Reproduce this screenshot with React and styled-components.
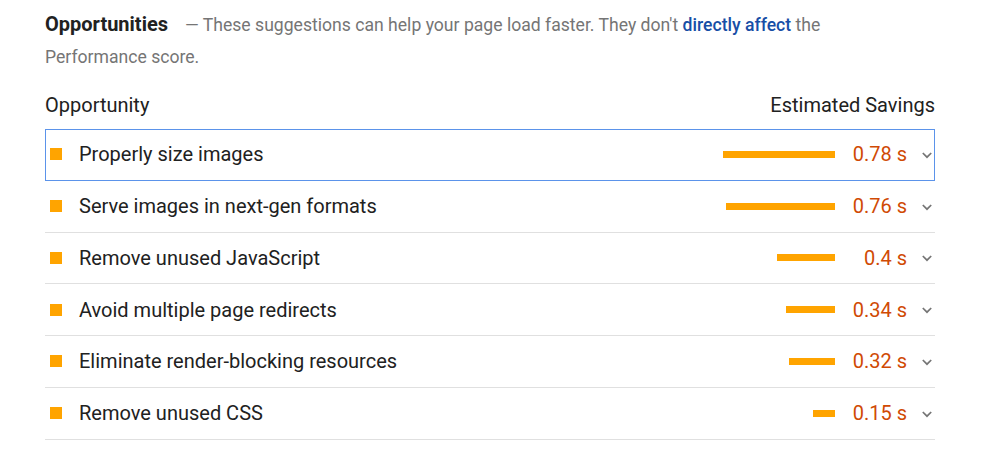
import React from "react";
import styled, { createGlobalStyle } from "styled-components";

const GlobalStyle = createGlobalStyle`
  body {
    margin: 0;
    background: #fff;
    font-family: Roboto, "Liberation Sans", sans-serif;
  }
`;

const items = [
  { title: "Properly size images", value: "0.78 s", bar: 112, focused: true },
  { title: "Serve images in next-gen formats", value: "0.76 s", bar: 109 },
  { title: "Remove unused JavaScript", value: "0.4 s", bar: 58 },
  { title: "Avoid multiple page redirects", value: "0.34 s", bar: 49 },
  { title: "Eliminate render-blocking resources", value: "0.32 s", bar: 46 },
  { title: "Remove unused CSS", value: "0.15 s", bar: 22 },
];

function Chevron() {
  return (
    <ChevronIcon viewBox="0 0 10 7" width="10" height="7">
      <polyline points="0.8,1 5,5.2 9.2,1" fill="none" stroke="#757575" strokeWidth="1.7" />
    </ChevronIcon>
  );
}

export default function App() {
  return (
    <Page>
      <GlobalStyle />
      <Intro>
        <Title>Opportunities</Title>
        <Description>
          — These suggestions can help your page load faster. They don't{" "}
          <Link>directly affect</Link> the Performance score.
        </Description>
      </Intro>
      <Header>
        <span>Opportunity</span>
        <span>Estimated Savings</span>
      </Header>
      <List>
        {items.map((item) => (
          <Row key={item.title} focused={item.focused}>
            <Square />
            <RowTitle>{item.title}</RowTitle>
            <Bar style={{ width: item.bar }} />
            <Value>{item.value}</Value>
            <Chevron />
          </Row>
        ))}
      </List>
    </Page>
  );
}

const Page = styled.div`
  width: 890px;
  padding-left: 45px;
  padding-top: 8px;
`;

const Intro = styled.div`
  max-width: 850px;
  font-size: 17.6px;
  line-height: 32px;
  color: #757575;
`;

const Title = styled.span`
  font-size: 20px;
  font-weight: 700;
  color: #212121;
  margin-right: 17px;
`;

const Description = styled.span``;

const Link = styled.span`
  color: #174ea6;
  font-weight: 500;
`;

const Header = styled.div`
  display: flex;
  justify-content: space-between;
  font-size: 20px;
  color: #212121;
  margin-top: 20px;
  height: 24px;
  line-height: 24px;
`;

const List = styled.div`
  margin-top: 12px;
`;

const Row = styled.div`
  display: flex;
  align-items: center;
  height: 51.75px;
  box-sizing: border-box;
  border-bottom: 1px solid #e0e0e0;
  outline: ${(p) => (p.focused ? "1px solid #5b93ea" : "none")};
  outline-offset: -1px;
  padding: 0 3px 0 5px;
`;

const Square = styled.div`
  width: 12px;
  height: 12px;
  background: #ffa400;
  margin-right: 17px;
  flex-shrink: 0;
`;

const RowTitle = styled.div`
  flex: 1;
  font-size: 20px;
  color: #212121;
`;

const Bar = styled.div`
  height: 7px;
  background: #ffa400;
`;

const Value = styled.div`
  width: 72px;
  text-align: right;
  font-size: 20px;
  color: #d04a04;
`;

const ChevronIcon = styled.svg`
  margin-left: 15px;
  margin-top: 2px;
  flex-shrink: 0;
`;
